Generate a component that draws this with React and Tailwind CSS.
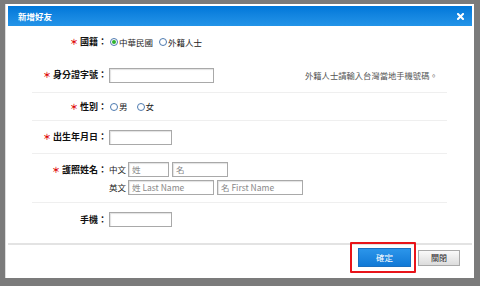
import React from "react";

const F = { fontFamily: '"Noto Sans CJK TC", "Noto Sans", sans-serif' };

function Star() {
  return <span className="text-[#d00] text-[8px] font-bold mr-[2px] leading-none">＊</span>;
}

function Radio({ checked }) {
  return (
    <span className="inline-flex items-center justify-center w-[8px] h-[8px] rounded-full border border-[#4d7ab0] bg-white mr-[1px]">
      {checked && <span className="w-[4px] h-[4px] rounded-full bg-[#2db32d]" />}
    </span>
  );
}

function Input({ w, ph }) {
  return (
    <div
      className={`h-[15px] border border-[#a9a9a9] bg-white shadow-[inset_1px_1px_1px_rgba(0,0,0,0.12)] flex items-center pl-[3px] text-[8.5px] text-[#888] ${w}`}
    >
      {ph}
    </div>
  );
}

function Label({ star, children }) {
  return (
    <div className="w-[77px] shrink-0 flex items-center justify-end text-[9px] font-bold text-[#111] pr-[2px]">
      {star && <Star />}
      <span>{children}</span>
    </div>
  );
}

export default function App() {
  return (
    <div style={F} className="w-[480px] h-[286px] bg-[#7b7b7b] overflow-hidden pt-[4px] pl-[5px]">
      <div className="w-[469px] h-[274px] bg-white border-l border-[#ddd] pt-[2px] pl-[2px] pr-[2px] flex flex-col">
        <div className="h-[20px] bg-gradient-to-b from-[#0077d9] to-[#2394e8] flex items-center justify-between pl-[10px] pr-[8px]">
          <span className="text-white text-[8.5px] font-bold">新增好友</span>
          <svg width="7" height="7" viewBox="0 0 7 7">
            <path d="M1 1L6 6M6 1L1 6" stroke="white" strokeWidth="2" strokeLinecap="square" />
          </svg>
        </div>
        <div className="ml-[24px] w-[415px] flex flex-col">
          <div className="h-[32px] flex items-center">
            <Label star>國籍：</Label>
            <div className="flex items-center text-[8.5px] text-[#222] pl-[1px]">
              <Radio checked />
              <span className="mr-[6px]">中華民國</span>
              <Radio />
              <span>外籍人士</span>
            </div>
          </div>
          <div className="h-[35px] flex items-center border-b border-[#efefef]">
            <Label star>身分證字號：</Label>
            <Input w="w-[105px]" />
            <span className="ml-[91px] text-[8.3px] text-[#555]">外籍人士請輸入台灣當地手機號碼。</span>
          </div>
          <div className="h-[28px] flex items-center border-b border-[#efefef]">
            <Label star>性別：</Label>
            <div className="flex items-center text-[8.5px] text-[#222] pl-[1px]">
              <Radio />
              <span className="mr-[9px]">男</span>
              <Radio />
              <span>女</span>
            </div>
          </div>
          <div className="h-[33px] flex items-center border-b border-[#efefef]">
            <Label star>出生年月日：</Label>
            <Input w="w-[63px]" />
          </div>
          <div className="h-[49px] flex border-b border-[#efefef] pt-[8px]">
            <div className="h-[15px] flex">
              <Label star>護照姓名：</Label>
            </div>
            <div className="flex flex-col gap-[3px]">
              <div className="flex items-center">
                <span className="w-[19px] text-[8.5px] text-[#222]">中文</span>
                <Input w="w-[41px]" ph="姓" />
                <div className="w-[3px]" />
                <Input w="w-[56px]" ph="名" />
              </div>
              <div className="flex items-center">
                <span className="w-[19px] text-[8.5px] text-[#222]">英文</span>
                <Input w="w-[86px]" ph="姓 Last Name" />
                <div className="w-[3px]" />
                <Input w="w-[86px]" ph="名 First Name" />
              </div>
            </div>
          </div>
          <div className="h-[33px] flex items-center">
            <Label>手機：</Label>
            <Input w="w-[63px]" />
          </div>
        </div>
        <div className="mt-[7px] border-t-2 border-[#e3e3e3] flex justify-end items-center pr-[12px] pt-[3px]">
          <div className="relative flex">
            <div className="w-[53px] h-[19px] bg-gradient-to-b from-[#2b95ea] to-[#1079d6] text-white text-[8.5px] border border-[#1a6fc0] flex items-center justify-center">
              確定
            </div>
            <div className="absolute left-[-8px] top-[-6px] w-[66px] h-[31px] border-2 border-[#e8141a] rounded-[1px]" />
          </div>
          <div className="ml-[7px] w-[42px] h-[16px] bg-gradient-to-b from-[#fafafa] to-[#dcdcdc] text-[#222] text-[8px] border border-[#aaa] flex items-center justify-center">
            關閉
          </div>
        </div>
      </div>
    </div>
  );
}
